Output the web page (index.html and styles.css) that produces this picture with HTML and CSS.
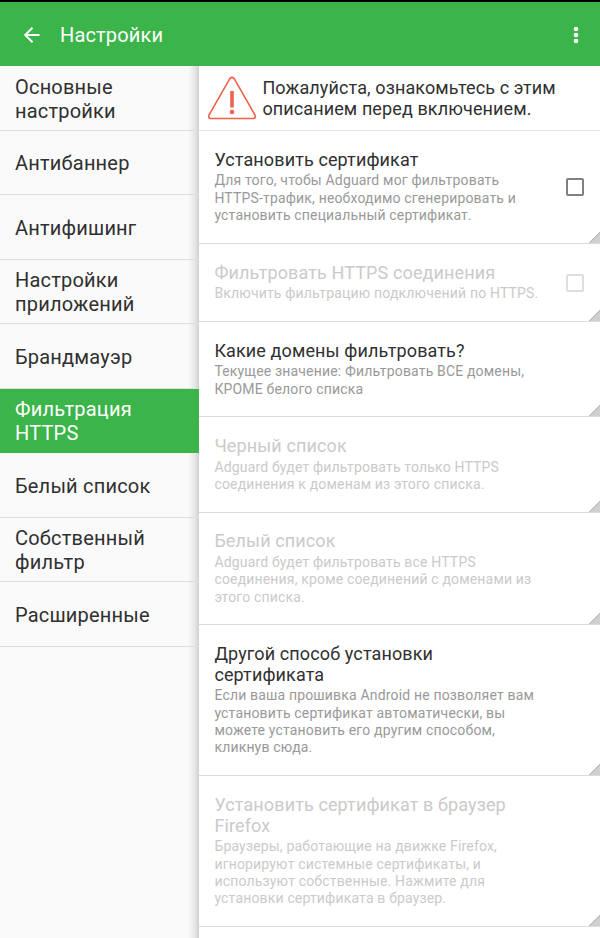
FILE: index.html
```html
<!DOCTYPE html>
<html lang="ru"><head><meta charset="utf-8"><title>Настройки</title><link rel="stylesheet" href="styles.css"></head>
<body>
<header class="bar">
<svg class="back" viewBox="0 0 24 24" width="24" height="24"><path d="M19.5 12H5.5M12.5 4.8 5.2 12l7.3 7.2" fill="none" stroke="#fff" stroke-width="1.9"/></svg>
<h1>Настройки</h1>
<svg class="more" viewBox="0 0 6 18" width="6" height="18" fill="#fff"><circle cx="3" cy="3" r="2.3"/><circle cx="3" cy="9" r="2.3"/><circle cx="3" cy="15" r="2.3"/></svg>
</header>
<div class="panes">
<nav class="side">
<a>Основные<br>настройки</a><a>Антибаннер</a><a>Антифишинг</a><a>Настройки<br>приложений</a><a>Брандмауэр</a><a class="active">Фильтрация<br>HTTPS</a><a>Белый список</a><a>Собственный<br>фильтр</a><a>Расширенные</a>
</nav>
<main class="content">
<div class="notice"><svg width="50" height="44" viewBox="0 0 50 44" fill="none" stroke="#f2614d"><path d="M27.2 2.6 48 39Q49.2 42.5 46 42.5H4Q.8 42.5 2 39L22.8 2.6Q25 .2 27.2 2.6Z" stroke-width="1.6"/><path d="M25 15V31.5" stroke-width="3.6"/><circle cx="25" cy="36" r="2.3" fill="#f2614d" stroke="none"/></svg><p>Пожалуйста, ознакомьтесь с этим<br>описанием перед включением.</p></div>
<section class="item cert"><div><h2>Установить сертификат</h2><p>Для того, чтобы Adguard мог фильтровать<br>HTTPS-трафик, необходимо сгенерировать и<br>установить специальный сертификат.</p></div><i class="check"></i></section>
<section class="item filter off"><div><h2>Фильтровать HTTPS соединения</h2><p>Включить фильтрацию подключений по HTTPS.</p></div><i class="check"></i></section>
<section class="item domains"><div><h2>Какие домены фильтровать?</h2><p>Текущее значение: Фильтровать ВСЕ домены,<br>КРОМЕ белого списка</p></div></section>
<section class="item black off"><div><h2>Черный список</h2><p>Adguard будет фильтровать только HTTPS<br>соединения к доменам из этого списка.</p></div></section>
<section class="item white off"><div><h2>Белый список</h2><p>Adguard будет фильтровать все HTTPS<br>соединения, кроме соединений с доменами из<br>этого списка.</p></div></section>
<section class="item other"><div><h2>Другой способ установки<br>сертификата</h2><p>Если ваша прошивка Android не позволяет вам<br>установить сертификат автоматически, вы<br>можете установить его другим способом,<br>кликнув сюда.</p></div></section>
<section class="item firefox off"><div><h2>Установить сертификат в браузер<br>Firefox</h2><p>Браузеры, работающие на движке Firefox,<br>игнорируют системные сертификаты, и<br>используют собственные. Нажмите для<br>установки сертификата в браузер.</p></div></section>
</main></div></body></html>
```
FILE: styles.css
```css
*{box-sizing:border-box}
body{margin:0;height:938px;overflow:hidden;background:#fff;font-family:Roboto,sans-serif;color:#303030}
h1,h2,p{margin:0;font-weight:400;white-space:nowrap}
.bar{height:66px;border-top:2px solid #000;background:#3bb44a;display:flex;align-items:center;padding:2px 21px 0 20px}
.bar h1{color:#fff;font-size:20px;letter-spacing:.15px;margin-left:16px;flex:1}
.panes{display:grid;grid-template-columns:199.4px 400.6px;height:872px}
.side{background:linear-gradient(to left,#d0d0d0,#e6e6e6 4px,#fafafa 11px)}
.side a{height:64.5px;border-bottom:1px solid #dedede;padding:2px 0 0 15px;display:flex;align-items:center;font-size:20px;line-height:24px;letter-spacing:.2px}
.side .active{background:#3bb44a;color:#fff;border-color:#3bb44a}
.notice{height:65px;border-bottom:1px solid #e2e2e2;display:flex;align-items:center;gap:5.5px;padding-left:7.5px;font-size:18px;line-height:21px;letter-spacing:.11px}
.item{border-bottom:1px solid #dcdcdc;display:flex;align-items:center;justify-content:space-between;padding:0 15.5px 0 15px;position:relative}
.item:after{content:"";position:absolute;right:0;bottom:0;width:11px;height:11px;background:linear-gradient(135deg,transparent 49%,#bbb 50%,#d0d0d0 60%)}
.item h2{font-size:18px;line-height:21px;letter-spacing:.12px;margin-bottom:2px;position:relative;top:-.5px}
.item p{font-size:14px;line-height:17.4px;color:#999;letter-spacing:.17px}
.off h2,.off p{color:#cacaca}
.check{width:18px;height:18px;border:2px solid #808080;border-radius:2px}
.off .check{border-color:#dedede}
.cert{height:113px}.filter{height:78px}.domains{height:95px}.black{height:96px}.white{height:112px}.other{height:151px}.firefox{height:151px}
```
